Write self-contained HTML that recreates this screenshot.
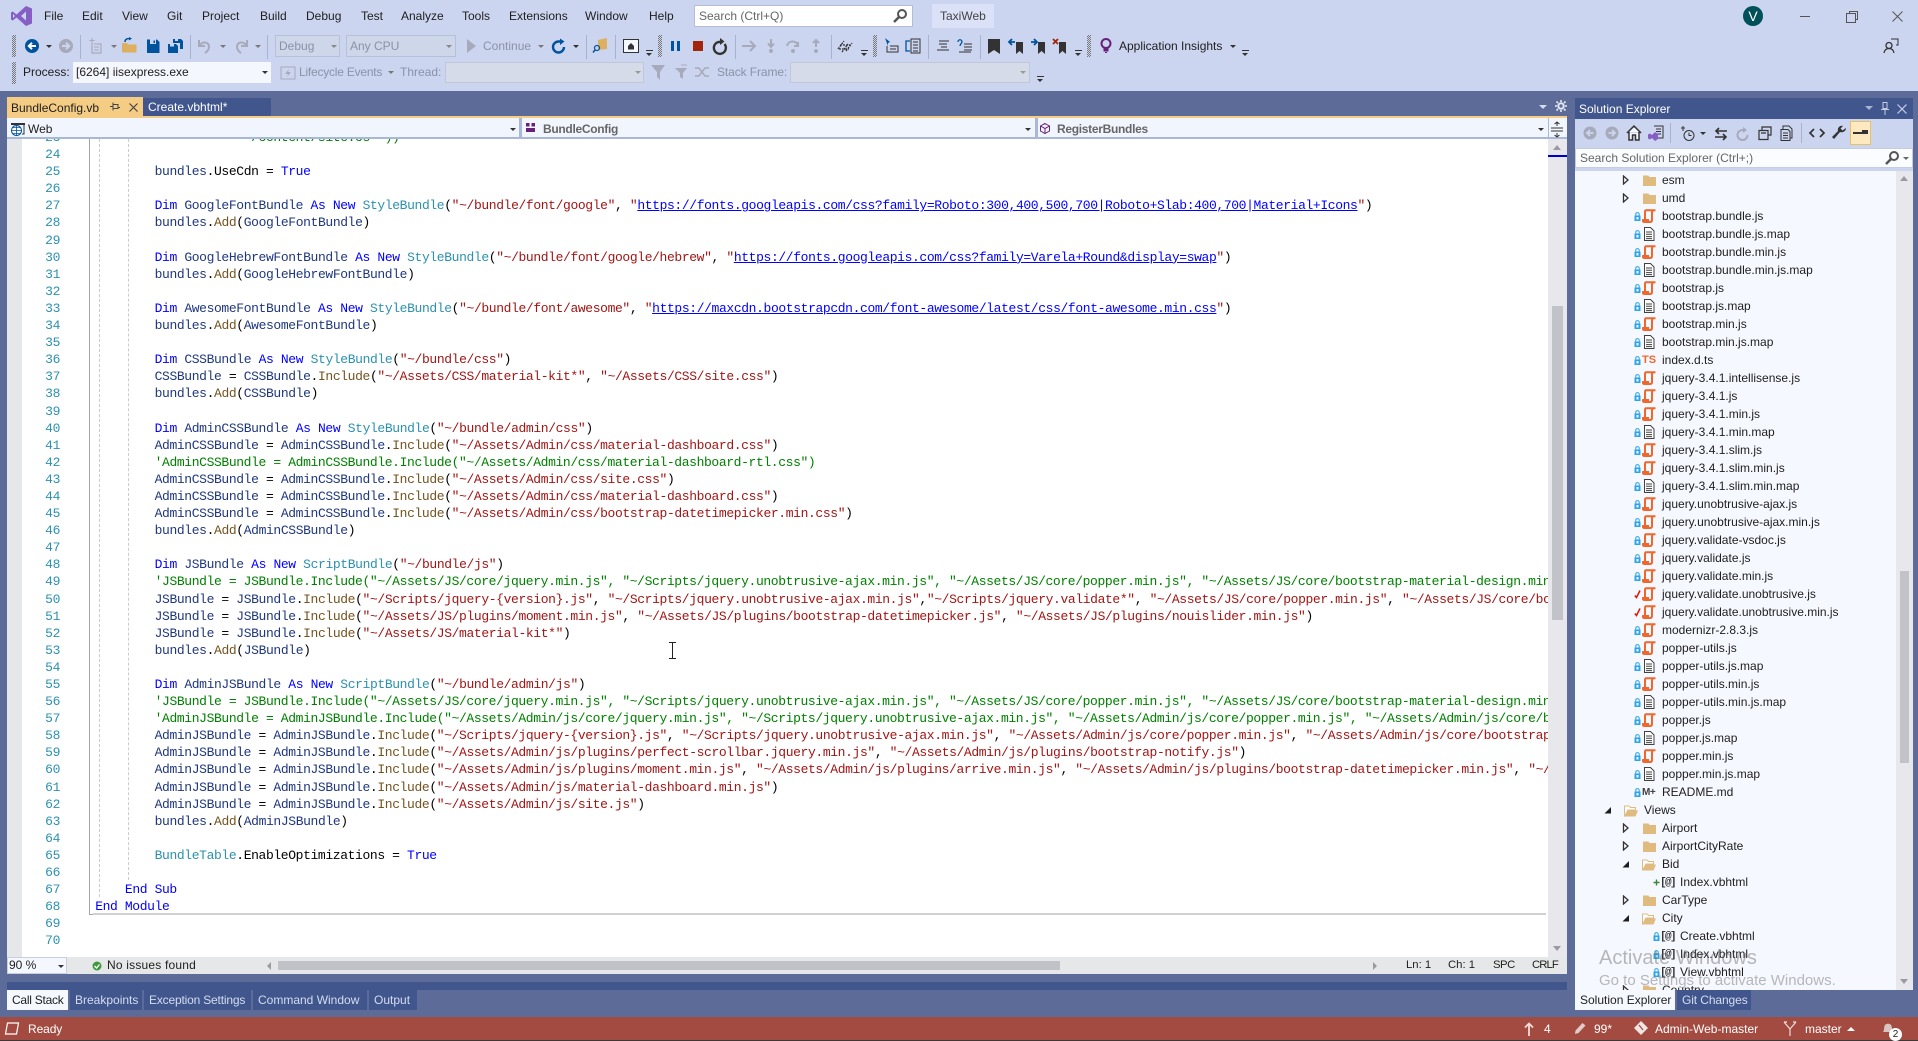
<!DOCTYPE html>
<html><head><meta charset="utf-8"><title>TaxiWeb - Microsoft Visual Studio</title>
<style>
*{box-sizing:border-box}
html,body{margin:0;padding:0;width:1918px;height:1041px;overflow:hidden;background:#ccd5f0;font:12px/18px "Liberation Sans",sans-serif;color:#1e1e1e}
.a,.m,.i,.t{position:absolute;white-space:nowrap}
.m{top:7px}
.i{width:16px;height:16px;overflow:visible}
.g{color:#8a92a8}
.tb{top:37px}
.tc{top:63px}
.sep{position:absolute;width:1px;height:24px;top:35px;background:#a9b3cf}
.grip{position:absolute;width:4px;height:22px;background-image:repeating-conic-gradient(#777 0 25%,transparent 0 50%);background-size:2px 2px}
.dd{position:absolute;width:0;height:0;border-left:3px solid transparent;border-right:3px solid transparent;border-top:3px solid #333}
.ov{position:absolute;width:7px;height:5px;border-top:1px solid #333}
.ov:after{content:"";position:absolute;left:0;top:2px;border-left:3.5px solid transparent;border-right:3.5px solid transparent;border-top:3px solid #333}
#code,#nums{position:absolute;margin:0;font-family:"Liberation Mono",monospace;font-size:13px;line-height:17.09px;letter-spacing:-.377px}
#code{left:88.2px;top:-10px;color:#000}
#nums{left:15px;top:-10px;width:38px;text-align:right;color:#2b91af}
#code b{font-weight:normal}
.k{color:#00f}.y{color:#2b91af}.s{color:#a31515}.c{color:#008000}.f{color:#74531f}.v{color:#1f377f}.u{color:#00f;text-decoration:underline}
.r{position:relative;height:18px;color:#1e1e1e}
.r span{position:absolute;left:87px;top:0;white-space:nowrap}
.r svg{position:absolute}
.lk{left:59px;top:5px;width:7px;height:9px}
.lk2{left:78px;top:5px;width:7px;height:9px}
.fi{left:67px;top:2px;width:14px;height:14px}
.xp{left:47px;top:4px;width:8px;height:10px}
.at{position:absolute;left:85px;top:0;font:11px/20px "Liberation Mono",monospace;color:#333;letter-spacing:-1.6px;font-weight:bold}
.tab{position:absolute;top:990px;height:20px;background:#40568d;color:#d5dcf0;line-height:20px;padding-left:5px;white-space:nowrap}
.st{position:absolute;top:1020px;color:#fff;white-space:nowrap}
.es{position:absolute;top:957px;line-height:17px;font-size:11.3px;white-space:nowrap}
</style></head><body>
<svg width="0" height="0" style="position:absolute">
<defs>
<symbol id="js" viewBox="0 0 14 14"><path d="M3.500 1.200h10M4 1.200C3 1.200 3 2 3 3v8M11 1.500C10.300 2 10 3 10 4v7c0 1.500-1 2-2 2H2c-1 0-1.300-1-1-2h6" fill="none" stroke="#f1672b" stroke-width="2"/></symbol>
<symbol id="mp" viewBox="0 0 14 14"><path d="M2.500.5h6l3.500 3.500v9.500H2.500z" fill="#fff" stroke="#424242"/><path d="M4 5h6M4 7.300h6M4 9.600h6M4 11.600h6" stroke="#424242"/></symbol>
<symbol id="lk" viewBox="0 0 7 9"><path d="M.5 3.500h6V9h-6z" fill="#2ba5e8"/><path d="M1.800 3.500V2c0-1.800 3.400-1.800 3.400 0v1.500" fill="none" stroke="#2ba5e8"/><rect x="2.500" y="5" width="2" height="2.500" fill="#fff"/></symbol>
<symbol id="fd" viewBox="0 0 14 14"><path d="M1 2.500h5.500l1 1.500H14v9H1z" fill="#dfbb80"/></symbol>
<symbol id="fo" viewBox="0 0 14 14"><path d="M.5 3h4.500l1.500 1.500h5V7H4l-3.500 6.500z" fill="#fff" stroke="#dfbb80"/><path d="M3.500 7.500H14l-2.500 6H.8z" fill="#dfbb80"/></symbol>
<symbol id="ex" viewBox="0 0 8 10"><path d="M1.500 1v8l4.500-4z" fill="#fff" stroke="#333" stroke-width="1.300"/></symbol>
<symbol id="co" viewBox="0 0 8 10"><path d="M7 2v6.500H.5z" fill="#1e1e1e"/></symbol>
<symbol id="ch" viewBox="0 0 7 9"><path d="M.8 5.500l1.700 2 3.500-7" fill="none" stroke="#e51400" stroke-width="1.500"/></symbol>
<symbol id="pl" viewBox="0 0 7 9"><path d="M3.500 1.500v6M.5 4.500h6" fill="none" stroke="#388a34" stroke-width="1.400"/></symbol>
<symbol id="svb" viewBox="0 0 16 16"><path d="M2 1.500h10l2.500 2.500v11H2z" fill="#00539c"/><rect x="5" y="1.500" width="6" height="4.500" fill="#ccd5f0"/><rect x="8.500" y="2.500" width="1.500" height="2.500" fill="#00539c"/></symbol>
</defs></svg>

<!-- title / menu -->
<svg class="i" style="left:11px;top:6px;width:21px;height:20px" viewBox="0 0 21 20"><path d="M15 0l6 2.500v15L15 20 5.500 11.500 1.800 14.500 0 13.500V6.500l1.800-1L5.500 8.500zM15 5.500l-5 4.500 5 4.500zM2 8v4l2-2z" fill="#865fc5" fill-rule="evenodd"/></svg>
<div class="m" style="left:44px">File</div><div class="m" style="left:82px">Edit</div><div class="m" style="left:122px">View</div><div class="m" style="left:167px">Git</div><div class="m" style="left:202px">Project</div><div class="m" style="left:260px">Build</div><div class="m" style="left:306px">Debug</div><div class="m" style="left:361px">Test</div><div class="m" style="left:401px">Analyze</div><div class="m" style="left:462px">Tools</div><div class="m" style="left:509px">Extensions</div><div class="m" style="left:585px">Window</div><div class="m" style="left:649px">Help</div>
<div class="a" style="left:694px;top:5px;width:219px;height:22px;background:#fff;border:1px solid #b4bdd8;color:#666;padding-left:4px;line-height:20px">Search (Ctrl+Q)</div>
<svg class="i" style="left:892px;top:8px" viewBox="0 0 16 16"><circle cx="10" cy="6" r="4" fill="none" stroke="#555" stroke-width="2"/><path d="M7 9l-5 5" stroke="#555" stroke-width="2.500"/></svg>
<div class="a" style="left:932px;top:4px;width:62px;height:24px;background:#dbe1f7;color:#444;line-height:24px;padding-left:8px">TaxiWeb</div>
<div class="a" style="left:1743px;top:6px;width:20px;height:20px;border-radius:50%;background:#00505a;color:#fff;text-align:center;font-size:14px;line-height:20px">V</div>
<div class="a" style="left:1800px;top:16px;width:10px;height:1px;background:#555"></div>
<svg class="i" style="left:1846px;top:11px;width:12px;height:12px" viewBox="0 0 12 12"><path d="M3.500 2.500V.5h8v8h-2M.5 2.500h9v9h-9z" fill="none" stroke="#555"/></svg>
<svg class="i" style="left:1892px;top:11px;width:11px;height:11px" viewBox="0 0 11 11"><path d="M.5.500l10 10M10.500.500l-10 10" stroke="#555" fill="none"/></svg>
<svg class="i" style="left:1883px;top:38px" viewBox="0 0 16 16"><path d="M8 1h7v6h-2" fill="none" stroke="#333"/><circle cx="6" cy="7.500" r="3" fill="none" stroke="#333" stroke-width="1.300"/><path d="M1 15c.5-3 2-4.500 5-4.500s4.500 1.500 5 4.500" fill="none" stroke="#333" stroke-width="1.300"/></svg>

<!-- toolbar 1 -->
<div class="grip" style="left:12px;top:35px"></div>
<svg class="i" style="left:24px;top:38px" viewBox="0 0 16 16"><circle cx="8" cy="8" r="7" fill="#00539c"/><path d="M12 8H5M8 4.800L4.800 8 8 11.200" fill="none" stroke="#fff" stroke-width="2"/></svg>
<div class="dd" style="left:46px;top:45px"></div>
<svg class="i" style="left:58px;top:38px" viewBox="0 0 16 16"><circle cx="8" cy="8" r="7" fill="#a6aabb"/><path d="M4 8h7M8 4.800L11.200 8 8 11.200" fill="none" stroke="#ccd5f0" stroke-width="2"/></svg>
<div class="sep" style="left:80px"></div>
<svg class="i" style="left:88px;top:38px" viewBox="0 0 16 16"><path d="M4 5v10h9V6H9" fill="none" stroke="#a6aabb" stroke-width="1.200"/><path d="M4 0v5M1.500 2.500h5M6 6h5M6 9h5M6 12h5" stroke="#a6aabb"/></svg>
<div class="dd" style="left:111px;top:45px;border-top-color:#777"></div>
<svg class="i" style="left:122px;top:37px" viewBox="0 0 16 16"><path d="M0 6h5l1 1.500h8.500v8H0z" fill="#dcb060"/><path d="M3 5c0-3 2-3.500 5-3.500" fill="none" stroke="#00539c" stroke-width="1.500"/><path d="M7 0l3 1.500L7 3.500z" fill="#00539c"/></svg>
<svg class="i" style="left:145px;top:38px" viewBox="0 0 16 16"><use href="#svb"/></svg>
<svg class="i" style="left:167px;top:38px" viewBox="0 0 16 16"><path d="M1 6h8l2 2v7H1z" fill="#00539c"/><path d="M6 1h2v2h3V1h3l2 2v8h-3V5H6z" fill="#00539c"/><rect x="3" y="6" width="4" height="2.500" fill="#ccd5f0"/></svg>
<div class="sep" style="left:190px"></div>
<svg class="i" style="left:197px;top:38px" viewBox="0 0 16 16"><path d="M2 2v6h6" fill="none" stroke="#a6aabb" stroke-width="2"/><path d="M3 7c3-4 9-3 9 2 0 2-1 4-4 6" fill="none" stroke="#a6aabb" stroke-width="2"/></svg>
<div class="dd" style="left:220px;top:45px;border-top-color:#777"></div>
<svg class="i" style="left:233px;top:38px" viewBox="0 0 16 16"><path d="M14 2v6H8" fill="none" stroke="#a6aabb" stroke-width="2"/><path d="M13 7c-3-4-9-3-9 2 0 2 1 4 4 6" fill="none" stroke="#a6aabb" stroke-width="2"/></svg>
<div class="dd" style="left:255px;top:45px;border-top-color:#777"></div>
<div class="sep" style="left:267px"></div>
<div class="a g" style="left:275px;top:35px;width:65px;height:22px;background:#ced6ea;border:1px solid #b8c0d8;line-height:20px;padding-left:3px">Debug</div>
<div class="dd" style="left:331px;top:45px;border-top-color:#888"></div>
<div class="a g" style="left:346px;top:35px;width:110px;height:22px;background:#ced6ea;border:1px solid #b8c0d8;line-height:20px;padding-left:3px">Any CPU</div>
<div class="dd" style="left:446px;top:45px;border-top-color:#888"></div>
<svg class="i" style="left:466px;top:39px" viewBox="0 0 16 16"><path d="M1 0l9 7-9 7z" fill="#a6aabb"/></svg>
<div class="t g tb" style="left:483px">Continue</div>
<div class="dd" style="left:538px;top:45px;border-top-color:#777"></div>
<svg class="i" style="left:551px;top:38px" viewBox="0 0 16 16"><path d="M13 9a5.500 5.500 0 1 1-5.500-5.500H10" fill="none" stroke="#00539c" stroke-width="2.400"/><path d="M9 .5l4.500 3L9 7z" fill="#00539c"/></svg>
<div class="dd" style="left:573px;top:45px"></div>
<div class="sep" style="left:586px"></div>
<svg class="i" style="left:593px;top:37px" viewBox="0 0 16 16"><path d="M5 3l9-2v11l-9 1z" fill="#dcb060"/><circle cx="4" cy="11" r="2.500" fill="none" stroke="#00539c" stroke-width="1.200"/><path d="M2 13l-2 2.500" stroke="#00539c" stroke-width="1.500"/></svg>
<div class="sep" style="left:615px"></div>
<svg class="i" style="left:623px;top:38px" viewBox="0 0 16 16"><rect x=".5" y="1.500" width="15" height="13" fill="#f5f7fe" stroke="#333"/><path d="M8 5L5 8v3.500h6V8z" fill="#333"/></svg>
<div class="ov" style="left:646px;top:50px"></div>
<div class="grip" style="left:658px;top:35px"></div>
<div class="a" style="left:671px;top:41px;width:3px;height:10px;background:#00539c"></div><div class="a" style="left:677px;top:41px;width:3px;height:10px;background:#00539c"></div>
<div class="a" style="left:693px;top:41px;width:10px;height:10px;background:#a1260d"></div>
<svg class="i" style="left:712px;top:38px" viewBox="0 0 16 16"><path d="M12.500 6a6 6 0 1 1-6-2H9" fill="none" stroke="#333" stroke-width="2.400"/><path d="M8 0l4.500 3.500L8 7z" fill="#333"/></svg>
<div class="sep" style="left:735px"></div>
<svg class="i" style="left:741px;top:38px" viewBox="0 0 16 16"><path d="M1 8h13M9 3l5 5-5 5" fill="none" stroke="#a6aabb" stroke-width="2"/></svg>
<svg class="i" style="left:763px;top:38px" viewBox="0 0 16 16"><path d="M8 1v7M5 5.500L8 9l3-3.500" fill="none" stroke="#a6aabb" stroke-width="2"/><circle cx="8" cy="13" r="2" fill="#a6aabb"/></svg>
<svg class="i" style="left:785px;top:38px" viewBox="0 0 16 16"><path d="M2 8c1-6 10-6 11 0M13 4v4H9" fill="none" stroke="#a6aabb" stroke-width="2"/><circle cx="8" cy="13" r="2" fill="#a6aabb"/></svg>
<svg class="i" style="left:808px;top:38px" viewBox="0 0 16 16"><path d="M8 9V2M5 5l3-3 3 3" fill="none" stroke="#a6aabb" stroke-width="2"/><circle cx="8" cy="13" r="2" fill="#a6aabb"/></svg>
<div class="sep" style="left:831px"></div>
<svg class="i" style="left:837px;top:38px" viewBox="0 0 16 16"><path d="M1 11L7 3M5 14l6-8M9 13l6-8M3 7h10M2 11h10" fill="none" stroke="#333" stroke-width="1.300" stroke-dasharray="2 1"/></svg>
<div class="ov" style="left:861px;top:50px"></div>
<div class="grip" style="left:873px;top:35px"></div>
<svg class="i" style="left:884px;top:38px" viewBox="0 0 16 16"><path d="M1 0l5 4-2 1v3z" fill="#00539c"/><path d="M3 8v6h11V8H6" fill="none" stroke="#333"/><path d="M6 11h6" stroke="#333"/></svg>
<svg class="i" style="left:905px;top:38px" viewBox="0 0 16 16"><path d="M5 3H1v10h4" fill="none" stroke="#00539c" stroke-width="1.300"/><path d="M6 1v14h9V1zM8 4h5M8 7h5M8 10h5M8 13h5" fill="none" stroke="#333"/></svg>
<div class="sep" style="left:928px"></div>
<svg class="i" style="left:935px;top:38px" viewBox="0 0 16 16"><path d="M4 3h10M4 6h8M6 9h6M2 12h12" stroke="#333"/></svg>
<svg class="i" style="left:957px;top:38px" viewBox="0 0 16 16"><path d="M1 4c0-3 4-3 4 0 0 1-2 2-2 4" fill="none" stroke="#00539c" stroke-width="1.300"/><path d="M7 6h8M7 9h8M7 12h8M2 14h12" stroke="#333"/></svg>
<div class="sep" style="left:980px"></div>
<svg class="i" style="left:986px;top:38px" viewBox="0 0 16 16"><path d="M2 1h12v15l-6-4-6 4z" fill="#333"/></svg>
<svg class="i" style="left:1009px;top:38px" viewBox="0 0 16 16"><path d="M7 4h7v12l-3.500-3L7 16z" fill="#333"/><path d="M0 4h6M3 1L0 4l3 3" fill="none" stroke="#00539c" stroke-width="1.800"/></svg>
<svg class="i" style="left:1031px;top:38px" viewBox="0 0 16 16"><path d="M7 4h7v12l-3.500-3L7 16z" fill="#333"/><path d="M0 4h6M3 1l3 3-3 3" fill="none" stroke="#00539c" stroke-width="1.800"/></svg>
<svg class="i" style="left:1052px;top:38px" viewBox="0 0 16 16"><path d="M7 4h7v12l-3.500-3L7 16z" fill="#333"/><path d="M1 1l5 5M6 1L1 6" stroke="#a1260d" stroke-width="1.800"/></svg>
<div class="ov" style="left:1075px;top:50px"></div>
<div class="grip" style="left:1087px;top:35px"></div>
<svg class="i" style="left:1098px;top:38px" viewBox="0 0 16 16"><circle cx="8" cy="5.500" r="4.500" fill="none" stroke="#68217a" stroke-width="2"/><path d="M6 10h4v3H6zM7 14.500h2" stroke="#68217a" fill="#68217a"/></svg>
<div class="t tb" style="left:1119px">Application Insights</div>
<div class="dd" style="left:1230px;top:45px"></div>
<div class="ov" style="left:1242px;top:50px"></div>

<!-- toolbar 2 -->
<div class="grip" style="left:12px;top:62px"></div>
<div class="t tc" style="left:23px">Process:</div>
<div class="a" style="left:73px;top:62px;width:198px;height:21px;background:#f5f7fe;line-height:20px;padding-left:3px">[6264] iisexpress.exe</div>
<div class="dd" style="left:262px;top:71px"></div>
<svg class="i" style="left:280px;top:65px" viewBox="0 0 16 16"><rect x="1" y="2" width="14" height="12" fill="none" stroke="#a6aabb"/><path d="M9 4L5 9h3l-1 3 4-5H8z" fill="#a6aabb"/></svg>
<div class="t g tc" style="left:299px;letter-spacing:-.22px">Lifecycle Events</div>
<div class="dd" style="left:388px;top:71px;border-top-color:#777"></div>
<div class="t g tc" style="left:400px">Thread:</div>
<div class="a" style="left:445px;top:62px;width:199px;height:21px;background:#d5dbe8;border:1px solid #c0c7da"></div>
<div class="dd" style="left:635px;top:71px;border-top-color:#999"></div>
<svg class="i" style="left:651px;top:64px" viewBox="0 0 16 16"><path d="M0 1h14L9 8v8L6 13V8z" fill="#a6aabb"/></svg>
<svg class="i" style="left:673px;top:64px" viewBox="0 0 16 16"><path d="M2 4h12l-4 5v6l-3-2V9z" fill="#a6aabb"/><path d="M8 1h6" stroke="#a6aabb"/></svg>
<svg class="i" style="left:694px;top:64px" viewBox="0 0 16 16"><path d="M1 4l4 0 6 8 4 0M1 12l4 0 6-8 4 0" fill="none" stroke="#a6aabb" stroke-width="1.500"/></svg>
<div class="t g tc" style="left:717px;letter-spacing:-.1px">Stack Frame:</div>
<div class="a" style="left:790px;top:62px;width:240px;height:21px;background:#d5dbe8;border:1px solid #c0c7da"></div>
<div class="dd" style="left:1020px;top:71px;border-top-color:#999"></div>
<div class="ov" style="left:1037px;top:76px"></div>

<!-- dark workspace -->
<div class="a" style="left:0;top:91px;width:1918px;height:950px;background:#5d6b99"></div>
<div class="a" style="left:7px;top:116px;width:1560px;height:2px;background:#f5cc84"></div>
<div class="a" style="left:7px;top:97px;width:136px;height:21px;background:#f5cc84;line-height:22px;padding-left:4px">BundleConfig.vb</div>
<svg class="i" style="left:110px;top:102px;width:10px;height:10px" viewBox="0 0 10 10"><path d="M3 2.500h5v4H3zM3 .5v8M0 4.500h3M8 5.500h2" fill="none" stroke="#444"/></svg>
<svg class="i" style="left:129px;top:103px;width:9px;height:9px" viewBox="0 0 9 9"><path d="M.5.500l8 8M8.500.500l-8 8" stroke="#444" stroke-width="1.200"/></svg>
<div class="a" style="left:143px;top:98px;width:128px;height:18px;background:#40568d;color:#fff;line-height:18px;padding-left:5px">Create.vbhtml*</div>
<div class="dd" style="left:1539px;top:105px;border-left-width:4px;border-right-width:4px;border-top:4px solid #d5dcf0"></div>
<svg class="i" style="left:1555px;top:100px;width:12px;height:12px" viewBox="0 0 12 12"><circle cx="6" cy="6" r="2.700" fill="none" stroke="#e5e9f5" stroke-width="2"/><path d="M6 0v2M6 10v2M0 6h2M10 6h2M1.500 1.500l1.500 1.500M9 9l1.500 1.500M1.500 10.500L3 9M9 3l1.500-1.500" stroke="#e5e9f5" stroke-width="1.600"/></svg>

<!-- nav bar -->
<div class="a" style="left:7px;top:118px;width:1560px;height:21px;background:#f1f5fe;border-bottom:2px solid #a9b8d8"></div>
<svg class="i" style="left:11px;top:122px;width:14px;height:14px" viewBox="0 0 14 14"><path d="M0 1h14v2H0z" fill="#333"/><path d="M13 3v9h-2" fill="none" stroke="#333"/><circle cx="5.500" cy="8.500" r="5" fill="#fff" stroke="#00539c"/><path d="M.5 8.500h10M5.500 3.500v10M2 5.500h7M2 11.500h7" stroke="#00539c" stroke-width=".8"/></svg>
<div class="t" style="left:28px;top:120px">Web</div>
<div class="dd" style="left:510px;top:128px"></div>
<div class="a" style="left:519px;top:118px;width:3px;height:19px;background:#a9b8d8"></div>
<svg class="i" style="left:526px;top:123px;width:9px;height:9px" viewBox="0 0 9 9"><path d="M0 0h3.500v3.500H0zM5.500 0H9v3.500H5.500zM0 5h9v4H0z" fill="#68217a"/></svg>
<div class="t" style="left:543px;top:120px;color:#666;font-weight:bold;letter-spacing:-.3px">BundleConfig</div>
<div class="dd" style="left:1025px;top:128px"></div>
<div class="a" style="left:1035px;top:118px;width:3px;height:19px;background:#a9b8d8"></div>
<svg class="i" style="left:1040px;top:123px;width:10px;height:11px" viewBox="0 0 10 11"><path d="M5 .5l4.500 2.500v5L5 10.500.5 8V3zM.5 3L5 5.500 9.500 3M5 5.500v5" fill="none" stroke="#68217a"/></svg>
<div class="t" style="left:1057px;top:120px;color:#666;font-weight:bold;letter-spacing:-.3px">RegisterBundles</div>
<div class="dd" style="left:1538px;top:128px"></div>
<div class="a" style="left:1548px;top:118px;width:1px;height:19px;background:#a9b8d8"></div>
<svg class="i" style="left:1551px;top:122px;width:12px;height:15px" viewBox="0 0 12 15"><path d="M0 6h12M0 9h12M6 0v4M6 11v4M3.500 2L6 0l2.500 2M3.500 13L6 15l2.500-2" fill="none" stroke="#333"/></svg>

<!-- editor -->
<div class="a" style="left:7px;top:139px;width:1541px;height:818px;background:#fff;overflow:hidden">
 <div class="a" style="left:0;top:0;width:15px;height:818px;background:#e6e7e8"></div>
 <div class="a" style="left:82px;top:0;width:1px;height:775px;background:#a5a5a5"></div>
 <div class="a" style="left:82px;top:775px;width:6px;height:1px;background:#a5a5a5"></div>
 <div class="a" style="left:91.500px;top:0;width:0;height:758px;border-left:1px dashed #ccc"></div>
 <div class="a" style="left:121px;top:0;width:0;height:741px;border-left:1px dashed #ccc"></div>
 <div class="a" style="left:86px;top:774px;width:1453px;height:2px;background:#d0d0d0"></div>
<pre id="nums">23
24
25
26
27
28
29
30
31
32
33
34
35
36
37
38
39
40
41
42
43
44
45
46
47
48
49
50
51
52
53
54
55
56
57
58
59
60
61
62
63
64
65
66
67
68
69
70</pre>
<pre id="code">                     <b class="c">/content/site.cs" ))</b>

        <b class="v">bundles</b>.UseCdn = <b class="k">True</b>

        <b class="k">Dim</b> <b class="v">GoogleFontBundle</b> <b class="k">As</b> <b class="k">New</b> <b class="y">StyleBundle</b>(<b class="s">"~/bundle/font/google"</b>, <b class="s">"</b><b class="u">https://fonts.googleapis.com/css?family=Roboto:300,400,500,700|Roboto+Slab:400,700|Material+Icons</b><b class="s">"</b>)
        <b class="v">bundles</b>.<b class="f">Add</b>(<b class="v">GoogleFontBundle</b>)

        <b class="k">Dim</b> <b class="v">GoogleHebrewFontBundle</b> <b class="k">As</b> <b class="k">New</b> <b class="y">StyleBundle</b>(<b class="s">"~/bundle/font/google/hebrew"</b>, <b class="s">"</b><b class="u">https://fonts.googleapis.com/css?family=Varela+Round&amp;display=swap</b><b class="s">"</b>)
        <b class="v">bundles</b>.<b class="f">Add</b>(<b class="v">GoogleHebrewFontBundle</b>)

        <b class="k">Dim</b> <b class="v">AwesomeFontBundle</b> <b class="k">As</b> <b class="k">New</b> <b class="y">StyleBundle</b>(<b class="s">"~/bundle/font/awesome"</b>, <b class="s">"</b><b class="u">https://maxcdn.bootstrapcdn.com/font-awesome/latest/css/font-awesome.min.css</b><b class="s">"</b>)
        <b class="v">bundles</b>.<b class="f">Add</b>(<b class="v">AwesomeFontBundle</b>)

        <b class="k">Dim</b> <b class="v">CSSBundle</b> <b class="k">As</b> <b class="k">New</b> <b class="y">StyleBundle</b>(<b class="s">"~/bundle/css"</b>)
        <b class="v">CSSBundle</b> = <b class="v">CSSBundle</b>.<b class="f">Include</b>(<b class="s">"~/Assets/CSS/material-kit*"</b>, <b class="s">"~/Assets/CSS/site.css"</b>)
        <b class="v">bundles</b>.<b class="f">Add</b>(<b class="v">CSSBundle</b>)

        <b class="k">Dim</b> <b class="v">AdminCSSBundle</b> <b class="k">As</b> <b class="k">New</b> <b class="y">StyleBundle</b>(<b class="s">"~/bundle/admin/css"</b>)
        <b class="v">AdminCSSBundle</b> = <b class="v">AdminCSSBundle</b>.<b class="f">Include</b>(<b class="s">"~/Assets/Admin/css/material-dashboard.css"</b>)
        <b class="c">'AdminCSSBundle = AdminCSSBundle.Include("~/Assets/Admin/css/material-dashboard-rtl.css")</b>
        <b class="v">AdminCSSBundle</b> = <b class="v">AdminCSSBundle</b>.<b class="f">Include</b>(<b class="s">"~/Assets/Admin/css/site.css"</b>)
        <b class="v">AdminCSSBundle</b> = <b class="v">AdminCSSBundle</b>.<b class="f">Include</b>(<b class="s">"~/Assets/Admin/css/material-dashboard.css"</b>)
        <b class="v">AdminCSSBundle</b> = <b class="v">AdminCSSBundle</b>.<b class="f">Include</b>(<b class="s">"~/Assets/Admin/css/bootstrap-datetimepicker.min.css"</b>)
        <b class="v">bundles</b>.<b class="f">Add</b>(<b class="v">AdminCSSBundle</b>)

        <b class="k">Dim</b> <b class="v">JSBundle</b> <b class="k">As</b> <b class="k">New</b> <b class="y">ScriptBundle</b>(<b class="s">"~/bundle/js"</b>)
        <b class="c">'JSBundle = JSBundle.Include("~/Assets/JS/core/jquery.min.js", "~/Scripts/jquery.unobtrusive-ajax.min.js", "~/Assets/JS/core/popper.min.js", "~/Assets/JS/core/bootstrap-material-design.min.js")</b>
        <b class="v">JSBundle</b> = <b class="v">JSBundle</b>.<b class="f">Include</b>(<b class="s">"~/Scripts/jquery-{version}.js"</b>, <b class="s">"~/Scripts/jquery.unobtrusive-ajax.min.js"</b>,<b class="s">"~/Scripts/jquery.validate*"</b>, <b class="s">"~/Assets/JS/core/popper.min.js"</b>, <b class="s">"~/Assets/JS/core/bootstrap-material-design.min.js"</b>)
        <b class="v">JSBundle</b> = <b class="v">JSBundle</b>.<b class="f">Include</b>(<b class="s">"~/Assets/JS/plugins/moment.min.js"</b>, <b class="s">"~/Assets/JS/plugins/bootstrap-datetimepicker.js"</b>, <b class="s">"~/Assets/JS/plugins/nouislider.min.js"</b>)
        <b class="v">JSBundle</b> = <b class="v">JSBundle</b>.<b class="f">Include</b>(<b class="s">"~/Assets/JS/material-kit*"</b>)
        <b class="v">bundles</b>.<b class="f">Add</b>(<b class="v">JSBundle</b>)

        <b class="k">Dim</b> <b class="v">AdminJSBundle</b> <b class="k">As</b> <b class="k">New</b> <b class="y">ScriptBundle</b>(<b class="s">"~/bundle/admin/js"</b>)
        <b class="c">'JSBundle = JSBundle.Include("~/Assets/JS/core/jquery.min.js", "~/Scripts/jquery.unobtrusive-ajax.min.js", "~/Assets/JS/core/popper.min.js", "~/Assets/JS/core/bootstrap-material-design.min.js")</b>
        <b class="c">'AdminJSBundle = AdminJSBundle.Include("~/Assets/Admin/js/core/jquery.min.js", "~/Scripts/jquery.unobtrusive-ajax.min.js", "~/Assets/Admin/js/core/popper.min.js", "~/Assets/Admin/js/core/bootstrap-material-design.min.js")</b>
        <b class="v">AdminJSBundle</b> = <b class="v">AdminJSBundle</b>.<b class="f">Include</b>(<b class="s">"~/Scripts/jquery-{version}.js"</b>, <b class="s">"~/Scripts/jquery.unobtrusive-ajax.min.js"</b>, <b class="s">"~/Assets/Admin/js/core/popper.min.js"</b>, <b class="s">"~/Assets/Admin/js/core/bootstrap-material-design.min.js"</b>)
        <b class="v">AdminJSBundle</b> = <b class="v">AdminJSBundle</b>.<b class="f">Include</b>(<b class="s">"~/Assets/Admin/js/plugins/perfect-scrollbar.jquery.min.js"</b>, <b class="s">"~/Assets/Admin/js/plugins/bootstrap-notify.js"</b>)
        <b class="v">AdminJSBundle</b> = <b class="v">AdminJSBundle</b>.<b class="f">Include</b>(<b class="s">"~/Assets/Admin/js/plugins/moment.min.js"</b>, <b class="s">"~/Assets/Admin/js/plugins/arrive.min.js"</b>, <b class="s">"~/Assets/Admin/js/plugins/bootstrap-datetimepicker.min.js"</b>, <b class="s">"~/Assets/Admin/js/plugins/nouislider.min.js"</b>)
        <b class="v">AdminJSBundle</b> = <b class="v">AdminJSBundle</b>.<b class="f">Include</b>(<b class="s">"~/Assets/Admin/js/material-dashboard.min.js"</b>)
        <b class="v">AdminJSBundle</b> = <b class="v">AdminJSBundle</b>.<b class="f">Include</b>(<b class="s">"~/Assets/Admin/js/site.js"</b>)
        <b class="v">bundles</b>.<b class="f">Add</b>(<b class="v">AdminJSBundle</b>)

        <b class="y">BundleTable</b>.EnableOptimizations = <b class="k">True</b>

    <b class="k">End Sub</b>
<b class="k">End Module</b>


</pre>
</div>
<!-- I-beam -->
<svg class="i" style="left:668px;top:642px;width:9px;height:17px" viewBox="0 0 9 17"><path d="M1 .5h7M1 16.500h7M4.500 .5v16" stroke="#222" fill="none"/></svg>

<!-- editor scrollbar -->
<div class="a" style="left:1548px;top:139px;width:19px;height:818px;background:#e8e8ec"></div>
<div class="a" style="left:1553px;top:145px;border-left:4.500px solid transparent;border-right:4.500px solid transparent;border-bottom:5px solid #9a9aa2"></div>
<div class="a" style="left:1548px;top:155px;width:19px;height:2px;background:#0000c8"></div>
<div class="a" style="left:1552px;top:306px;width:11px;height:314px;background:#c2c3c9"></div>
<div class="a" style="left:1553px;top:946px;border-left:4.500px solid transparent;border-right:4.500px solid transparent;border-top:5px solid #9a9aa2"></div>

<!-- editor status -->
<div class="a" style="left:7px;top:957px;width:1560px;height:17px;background:#e6e7e8"></div>
<div class="a" style="left:7px;top:957px;width:60px;height:17px;background:#f5f7fe;border:1px solid #c8cede;line-height:15px;padding-left:1px">90 %</div>
<div class="dd" style="left:58px;top:965px"></div>
<svg class="i" style="left:92px;top:961px;width:10px;height:10px" viewBox="0 0 10 10"><circle cx="5" cy="5" r="4.500" fill="#3f9a3f"/><path d="M2.500 5l2 2 3-3.500" fill="none" stroke="#fff" stroke-width="1.300"/></svg>
<div class="t" style="left:107px;top:957px;line-height:17px;letter-spacing:.2px">No issues found</div>
<div class="a" style="left:267px;top:962px;border-top:4px solid transparent;border-bottom:4px solid transparent;border-right:4px solid #9a9aa2"></div>
<div class="a" style="left:278px;top:961px;width:782px;height:9px;background:#c0c2c7"></div>
<div class="a" style="left:1373px;top:962px;border-top:4px solid transparent;border-bottom:4px solid transparent;border-left:4px solid #9a9aa2"></div>
<div class="es" style="left:1406px">Ln: 1</div>
<div class="es" style="left:1448px">Ch: 1</div>
<div class="es" style="left:1493px;letter-spacing:-.5px">SPC</div>
<div class="es" style="left:1532px;letter-spacing:-.9px">CRLF</div>

<!-- bottom tool window stub -->
<div class="a" style="left:7px;top:982px;width:1560px;height:8px;background:#40568d"></div>
<div class="a" style="left:7px;top:990px;width:61px;height:20px;background:#f5f8ff;line-height:20px;padding-left:5px;letter-spacing:-.25px;white-space:nowrap">Call Stack</div>
<div class="tab" style="left:70px;width:72px">Breakpoints</div>
<div class="tab" style="left:144px;width:107px;letter-spacing:-.18px">Exception Settings</div>
<div class="tab" style="left:253px;width:114px">Command Window</div>
<div class="tab" style="left:369px;width:48px">Output</div>

<!-- solution explorer -->
<div class="a" style="left:1575px;top:98px;width:338px;height:21px;background:#40568d;color:#fff;line-height:22px;padding-left:4px">Solution Explorer</div>
<div class="dd" style="left:1865px;top:106px;border-left-width:4px;border-right-width:4px;border-top:4px solid #a9b5d5"></div>
<svg class="i" style="left:1880px;top:102px;width:10px;height:13px" viewBox="0 0 10 13"><path d="M3 .5h4v6H3zM1 7.500h8M5 8v5" fill="none" stroke="#c5cde5"/></svg>
<svg class="i" style="left:1897px;top:104px;width:10px;height:10px" viewBox="0 0 10 10"><path d="M.5.500l9 9M9.500.500l-9 9" stroke="#c5cde5" stroke-width="1.200"/></svg>
<div class="a" style="left:1575px;top:119px;width:338px;height:52px;background:#ccd5f0"></div>
<svg class="i" style="left:1583px;top:126px;width:14px;height:14px" viewBox="0 0 14 14"><circle cx="7" cy="7" r="6.500" fill="#a6aabb"/><path d="M10.500 7H4M7 4L4 7l3 3" fill="none" stroke="#ccd5f0" stroke-width="1.800"/></svg>
<svg class="i" style="left:1605px;top:126px;width:14px;height:14px" viewBox="0 0 14 14"><circle cx="7" cy="7" r="6.500" fill="#a6aabb"/><path d="M3.500 7H10M7 4l3 3-3 3" fill="none" stroke="#ccd5f0" stroke-width="1.800"/></svg>
<svg class="i" style="left:1626px;top:125px" viewBox="0 0 16 16"><path d="M1 8l7-7 7 7M3 7v8h3.500v-5h3v5H13V7" fill="#f5f7fe" stroke="#333" stroke-width="1.500"/></svg>
<svg class="i" style="left:1648px;top:125px" viewBox="0 0 16 16"><path d="M6 1h9v12H7" fill="none" stroke="#333"/><path d="M8 4h5M8 6.500h5M8 9h5" stroke="#333"/><path d="M7 7l3 2v5l-3 2-3-3-2 1.500-2-1v-4l2-1 2 1.500z" fill="#865fc5"/></svg>
<div class="a" style="left:1670px;top:123px;width:1px;height:20px;background:#a9b3cf"></div>
<svg class="i" style="left:1680px;top:126px" viewBox="0 0 16 16"><circle cx="9" cy="9.500" r="5" fill="none" stroke="#333"/><path d="M9 6.500v3h2.500M1 2h4M3 0v5" stroke="#333" fill="none"/></svg>
<div class="dd" style="left:1700px;top:132px"></div>
<svg class="i" style="left:1713px;top:126px" viewBox="0 0 16 16"><path d="M14 5H3M6 2L3 5l3 3M2 11h11M10 8l3 3-3 3" fill="none" stroke="#333" stroke-width="1.600"/></svg>
<svg class="i" style="left:1735px;top:126px" viewBox="0 0 16 16"><path d="M12.500 9a5 5 0 1 1-5-5H9" fill="none" stroke="#a6aabb" stroke-width="2"/><path d="M8 1l4 3-4 3z" fill="#a6aabb"/></svg>
<svg class="i" style="left:1757px;top:125px" viewBox="0 0 16 16"><path d="M5 5V2h9v8h-3M2 5.500h9v9H2zM4 8h5" fill="none" stroke="#333" stroke-width="1.200"/></svg>
<svg class="i" style="left:1779px;top:125px" viewBox="0 0 16 16"><path d="M4 4V1h6l3 3v9h-2M2 4.500h7l2 2v9H2zM4 8h5M4 10.500h5M4 13h5" fill="none" stroke="#333"/></svg>
<div class="a" style="left:1801px;top:123px;width:1px;height:20px;background:#a9b3cf"></div>
<svg class="i" style="left:1809px;top:125px" viewBox="0 0 16 16"><path d="M5 4L1 8l4 4M11 4l4 4-4 4" fill="none" stroke="#333" stroke-width="1.700"/></svg>
<svg class="i" style="left:1831px;top:125px" viewBox="0 0 16 16"><path d="M15 3c0 3-3 5-6 4l-6 7-2-2 6-6C6 3 9 0 12 1L9.500 3.500l2 2z" fill="#333"/></svg>
<div class="a" style="left:1850px;top:121px;width:21px;height:24px;background:#fde8c0;border:1px solid #e5c365"></div>
<div class="a" style="left:1853px;top:132px;width:15px;height:2px;background:#333"></div><div class="a" style="left:1862px;top:130px;width:6px;height:4px;background:#333"></div>
<div class="a" style="left:1575px;top:148px;width:338px;height:20px;background:#fbfcff;border:1px solid #c5cde0;color:#666;line-height:18px;padding-left:4px">Search Solution Explorer (Ctrl+;)</div>
<svg class="i" style="left:1884px;top:150px" viewBox="0 0 16 16"><circle cx="10" cy="6" r="4" fill="none" stroke="#555" stroke-width="2"/><path d="M7 9l-5 5" stroke="#555" stroke-width="2.500"/></svg>
<div class="dd" style="left:1903px;top:157px;border-top-color:#666"></div>

<div class="a" style="left:1575px;top:171px;width:338px;height:819px;background:#f6f8ff;overflow:hidden">
<div class="r"><svg class="xp"><use href="#ex"/></svg><svg class="fi"><use href="#fd"/></svg><span>esm</span></div>
<div class="r"><svg class="xp"><use href="#ex"/></svg><svg class="fi"><use href="#fd"/></svg><span>umd</span></div>
<div class="r"><svg class="lk"><use href="#lk"/></svg><svg class="fi"><use href="#js"/></svg><span>bootstrap.bundle.js</span></div>
<div class="r"><svg class="lk"><use href="#lk"/></svg><svg class="fi"><use href="#mp"/></svg><span>bootstrap.bundle.js.map</span></div>
<div class="r"><svg class="lk"><use href="#lk"/></svg><svg class="fi"><use href="#js"/></svg><span>bootstrap.bundle.min.js</span></div>
<div class="r"><svg class="lk"><use href="#lk"/></svg><svg class="fi"><use href="#mp"/></svg><span>bootstrap.bundle.min.js.map</span></div>
<div class="r"><svg class="lk"><use href="#lk"/></svg><svg class="fi"><use href="#js"/></svg><span>bootstrap.js</span></div>
<div class="r"><svg class="lk"><use href="#lk"/></svg><svg class="fi"><use href="#mp"/></svg><span>bootstrap.js.map</span></div>
<div class="r"><svg class="lk"><use href="#lk"/></svg><svg class="fi"><use href="#js"/></svg><span>bootstrap.min.js</span></div>
<div class="r"><svg class="lk"><use href="#lk"/></svg><svg class="fi"><use href="#mp"/></svg><span>bootstrap.min.js.map</span></div>
<div class="r"><svg class="lk"><use href="#lk"/></svg><div class="a" style="left:67px;top:0;font:bold 11px/19px 'Liberation Sans',sans-serif;color:#f1672b">TS</div><span>index.d.ts</span></div>
<div class="r"><svg class="lk"><use href="#lk"/></svg><svg class="fi"><use href="#js"/></svg><span>jquery-3.4.1.intellisense.js</span></div>
<div class="r"><svg class="lk"><use href="#lk"/></svg><svg class="fi"><use href="#js"/></svg><span>jquery-3.4.1.js</span></div>
<div class="r"><svg class="lk"><use href="#lk"/></svg><svg class="fi"><use href="#js"/></svg><span>jquery-3.4.1.min.js</span></div>
<div class="r"><svg class="lk"><use href="#lk"/></svg><svg class="fi"><use href="#mp"/></svg><span>jquery-3.4.1.min.map</span></div>
<div class="r"><svg class="lk"><use href="#lk"/></svg><svg class="fi"><use href="#js"/></svg><span>jquery-3.4.1.slim.js</span></div>
<div class="r"><svg class="lk"><use href="#lk"/></svg><svg class="fi"><use href="#js"/></svg><span>jquery-3.4.1.slim.min.js</span></div>
<div class="r"><svg class="lk"><use href="#lk"/></svg><svg class="fi"><use href="#mp"/></svg><span>jquery-3.4.1.slim.min.map</span></div>
<div class="r"><svg class="lk"><use href="#lk"/></svg><svg class="fi"><use href="#js"/></svg><span>jquery.unobtrusive-ajax.js</span></div>
<div class="r"><svg class="lk"><use href="#lk"/></svg><svg class="fi"><use href="#js"/></svg><span>jquery.unobtrusive-ajax.min.js</span></div>
<div class="r"><svg class="lk"><use href="#lk"/></svg><svg class="fi"><use href="#js"/></svg><span>jquery.validate-vsdoc.js</span></div>
<div class="r"><svg class="lk"><use href="#lk"/></svg><svg class="fi"><use href="#js"/></svg><span>jquery.validate.js</span></div>
<div class="r"><svg class="lk"><use href="#lk"/></svg><svg class="fi"><use href="#js"/></svg><span>jquery.validate.min.js</span></div>
<div class="r"><svg class="lk"><use href="#ch"/></svg><svg class="fi"><use href="#js"/></svg><span>jquery.validate.unobtrusive.js</span></div>
<div class="r"><svg class="lk"><use href="#ch"/></svg><svg class="fi"><use href="#js"/></svg><span>jquery.validate.unobtrusive.min.js</span></div>
<div class="r"><svg class="lk"><use href="#lk"/></svg><svg class="fi"><use href="#js"/></svg><span>modernizr-2.8.3.js</span></div>
<div class="r"><svg class="lk"><use href="#lk"/></svg><svg class="fi"><use href="#js"/></svg><span>popper-utils.js</span></div>
<div class="r"><svg class="lk"><use href="#lk"/></svg><svg class="fi"><use href="#mp"/></svg><span>popper-utils.js.map</span></div>
<div class="r"><svg class="lk"><use href="#lk"/></svg><svg class="fi"><use href="#js"/></svg><span>popper-utils.min.js</span></div>
<div class="r"><svg class="lk"><use href="#lk"/></svg><svg class="fi"><use href="#mp"/></svg><span>popper-utils.min.js.map</span></div>
<div class="r"><svg class="lk"><use href="#lk"/></svg><svg class="fi"><use href="#js"/></svg><span>popper.js</span></div>
<div class="r"><svg class="lk"><use href="#lk"/></svg><svg class="fi"><use href="#mp"/></svg><span>popper.js.map</span></div>
<div class="r"><svg class="lk"><use href="#lk"/></svg><svg class="fi"><use href="#js"/></svg><span>popper.min.js</span></div>
<div class="r"><svg class="lk"><use href="#lk"/></svg><svg class="fi"><use href="#mp"/></svg><span>popper.min.js.map</span></div>
<div class="r"><svg class="lk"><use href="#lk"/></svg><div class="a" style="left:67px;top:0;font:bold 10px/19px 'Liberation Sans',sans-serif;color:#424242;letter-spacing:-.5px">M+</div><span>README.md</span></div>
<div class="r"><svg class="xp" style="left:29px"><use href="#co"/></svg><svg class="fi" style="left:49px"><use href="#fo"/></svg><span style="left:69px">Views</span></div>
<div class="r"><svg class="xp"><use href="#ex"/></svg><svg class="fi"><use href="#fd"/></svg><span>Airport</span></div>
<div class="r"><svg class="xp"><use href="#ex"/></svg><svg class="fi"><use href="#fd"/></svg><span>AirportCityRate</span></div>
<div class="r"><svg class="xp"><use href="#co"/></svg><svg class="fi"><use href="#fo"/></svg><span>Bid</span></div>
<div class="r"><svg class="lk2"><use href="#pl"/></svg><div class="at">[@]</div><span style="left:105px">Index.vbhtml</span></div>
<div class="r"><svg class="xp"><use href="#ex"/></svg><svg class="fi"><use href="#fd"/></svg><span>CarType</span></div>
<div class="r"><svg class="xp"><use href="#co"/></svg><svg class="fi"><use href="#fo"/></svg><span>City</span></div>
<div class="r"><svg class="lk2"><use href="#lk"/></svg><div class="at">[@]</div><span style="left:105px">Create.vbhtml</span></div>
<div class="r"><svg class="lk2"><use href="#lk"/></svg><div class="at">[@]</div><span style="left:105px">Index.vbhtml</span></div>
<div class="r"><svg class="lk2"><use href="#lk"/></svg><div class="at">[@]</div><span style="left:105px">View.vbhtml</span></div>
<div class="r"><svg class="xp"><use href="#ex"/></svg><svg class="fi"><use href="#fd"/></svg><span>Country</span></div>
</div>
<div class="a" style="left:1896px;top:171px;width:17px;height:819px;background:#e8e8ec"></div>
<div class="a" style="left:1900px;top:176px;border-left:4.500px solid transparent;border-right:4.500px solid transparent;border-bottom:5px solid #9a9aa2"></div>
<div class="a" style="left:1900px;top:571px;width:9px;height:192px;background:#c2c3c9"></div>
<div class="a" style="left:1900px;top:979px;border-left:4.500px solid transparent;border-right:4.500px solid transparent;border-top:5px solid #9a9aa2"></div>
<div class="a" style="left:1575px;top:990px;width:100px;height:20px;background:#f6f8ff;line-height:20px;padding-left:5px;white-space:nowrap">Solution Explorer</div>
<div class="tab" style="left:1677px;width:74px;letter-spacing:-.1px">Git Changes</div>

<div class="a" style="left:1599px;top:946px;font-size:20px;line-height:24px;color:rgba(90,90,90,.42);white-space:nowrap">Activate Windows</div>
<div class="a" style="left:1599px;top:972px;font-size:15px;line-height:18px;color:rgba(90,90,90,.42);white-space:nowrap">Go to Settings to activate Windows.</div>

<!-- status bar -->
<div class="a" style="left:0;top:1017px;width:1918px;height:23px;background:#a34b41"></div>
<div class="a" style="left:0;top:1040px;width:1918px;height:1px;background:#3a3a3a"></div>
<svg class="i" style="left:4px;top:1022px;width:16px;height:13px" viewBox="0 0 16 13"><path d="M3.500 1h11l-2 11h-11z" fill="none" stroke="#fff" stroke-width="1.200"/></svg>
<div class="st" style="left:28px;letter-spacing:-.1px">Ready</div>
<svg class="i" style="left:1524px;top:1022px;width:10px;height:14px" viewBox="0 0 10 14"><path d="M5 14V2M1 5.500L5 1.500l4 4" fill="none" stroke="#f2dcd9" stroke-width="1.800"/></svg>
<div class="st" style="left:1544px">4</div>
<svg class="i" style="left:1574px;top:1022px;width:12px;height:13px" viewBox="0 0 12 13"><path d="M8.500 1l3 2.500-7 7.500L1 12l.5-3.500z" fill="#e0cbc8"/></svg>
<div class="st" style="left:1594px">99*</div>
<svg class="i" style="left:1634px;top:1021px;width:14px;height:14px" viewBox="0 0 14 14"><path d="M7 0l7 7-7 7-7-7z" fill="#f2e6e4"/><path d="M5 4l4 5" stroke="#a34b41" stroke-width="1.300"/></svg>
<div class="st" style="left:1655px">Admin-Web-master</div>
<svg class="i" style="left:1783px;top:1021px;width:14px;height:15px" viewBox="0 0 14 15"><path d="M7 15V8L1 1M7 8l6-7M1 1h3M13 1h-3" fill="none" stroke="#f2dcd9" stroke-width="1.200"/></svg>
<div class="st" style="left:1805px">master</div>
<div class="a" style="left:1847px;top:1027px;border-left:4px solid transparent;border-right:4px solid transparent;border-bottom:4px solid #fff"></div>
<svg class="i" style="left:1881px;top:1021px;width:14px;height:14px" viewBox="0 0 14 14"><path d="M2 11c1-1 1-3 1.500-6S10 2 10.500 5 12 10 13 11z" fill="#d9c4c1"/></svg>
<div class="a" style="left:1889px;top:1028px;width:13px;height:13px;border-radius:50%;background:#fff;color:#222;text-align:center;font-size:10px;line-height:13px">2</div>
</body></html>
